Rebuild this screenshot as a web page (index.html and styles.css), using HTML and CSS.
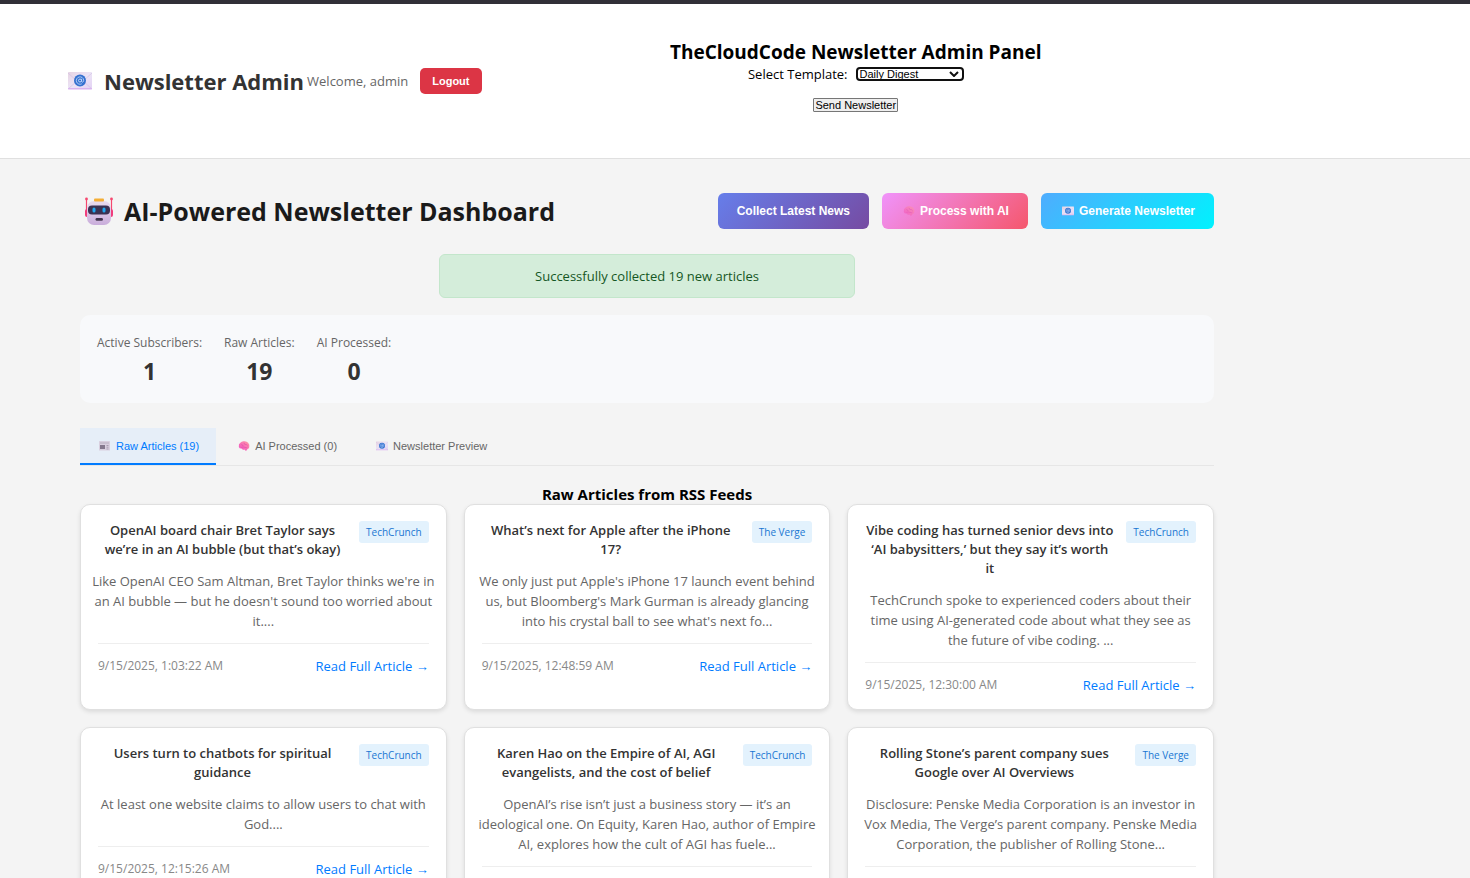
FILE: index.html
```html
<!DOCTYPE html>
<html lang="en">
<head>
<meta charset="utf-8">
<title>Newsletter Admin</title>
<link rel="stylesheet" href="styles.css">
</head>
<body>
<svg class="defs" aria-hidden="true">
  <defs>
    <linearGradient id="env" x1="0" y1="0" x2="1" y2="1"><stop offset="0" stop-color="#e6d3e2"/><stop offset=".5" stop-color="#ece4f6"/><stop offset="1" stop-color="#e3d2f4"/></linearGradient>
    <linearGradient id="face" x1="0" y1="0" x2="0" y2="1"><stop offset="0" stop-color="#e9dcef"/><stop offset="1" stop-color="#c9addb"/></linearGradient>
    <linearGradient id="brain" x1="1" y1="0" x2="0" y2="1"><stop offset="0" stop-color="#ff9aa5"/><stop offset="1" stop-color="#f04fc4"/></linearGradient>
    <symbol id="i-mail" viewBox="0 0 24 18">
      <rect x="0" y="0" width="24" height="17" rx="1" fill="url(#env)"/>
      <path d="M0 1l9 8-9 8M24 1l-9 8 9 8" fill="none" stroke="#d3c2e2" stroke-width=".7"/>
      <rect x="0" y="16" width="24" height="1.4" rx=".6" fill="#d9b4ef"/>
      <circle cx="12" cy="8.5" r="6" fill="#3572cf"/>
      <circle cx="12" cy="8.5" r="1.5" fill="none" stroke="#c6dcff" stroke-width=".9"/>
      <path d="M13.6 6.8v2.4q0 1 1 1 1.2-.3 1.1-2A3.7 3.7 0 1 0 13.8 11.8" fill="none" stroke="#c6dcff" stroke-width=".8"/>
    </symbol>
    <symbol id="i-robot" viewBox="0 0 28 28">
      <path d="M1.500 2v17M26.500 2v17" stroke="#f5476f" stroke-width="1.200"/>
      <circle cx="1.500" cy="2" r="1.400" fill="#f5476f"/><circle cx="26.500" cy="2" r="1.400" fill="#f5476f"/>
      <rect x="0" y="12" width="4" height="8" rx="2" fill="#f03d7c"/><rect x="24" y="12" width="4" height="8" rx="2" fill="#f03d7c"/>
      <rect x="2" y="4" width="24" height="24" rx="7" fill="url(#face)"/>
      <rect x="9" y="1.500" width="10" height="3" rx="1" fill="#f4ae35"/>
      <rect x="3" y="8.500" width="22" height="9" rx="4" fill="#3b3152"/>
      <rect x="7.500" y="10.500" width="3" height="5" rx="1.500" fill="#20a8f0"/><rect x="17.500" y="10.500" width="3" height="5" rx="1.500" fill="#20a8f0"/>
      <rect x="10.500" y="21" width="7.500" height="2.800" rx="1.400" fill="#44364f"/>
    </symbol>
    <symbol id="i-brain" viewBox="0 0 12 11">
      <path d="M.3 6.500Q-.2 3 2 2 3.500 0 6 .3q3-.3 4.500 1.700Q12.500 4 11.800 6.800q-.3 2-2 2Q9.500 11 7.700 10.800L6.500 9.300Q4 10 3.300 8.300 1 8.500 .3 6.500z" fill="url(#brain)"/>
      <path d="M3 4q2 0 2 1.500M6 2q0 2 2 2t2 1M3 7q2-1 4 0t3-.5" fill="none" stroke="#d63aa8" stroke-width=".5"/>
    </symbol>
    <symbol id="i-news" viewBox="0 0 12 10">
      <rect x="0" y="0" width="11" height="9.500" rx=".5" fill="#d9cfdf"/>
      <path d="M1 2h9" stroke="#b9aebf" stroke-width="1"/>
      <rect x="1" y="4" width="5" height="4" fill="#85788d"/>
      <path d="M7.500 4.500h2M7.500 6.200h2M7.500 8h2" stroke="#a598ad" stroke-width=".9"/>
    </symbol>
  </defs>
</svg>

<header class="topbar">
  <h1 class="brand"><svg class="brand-icon" aria-hidden="true"><use href="#i-mail"/></svg>Newsletter Admin</h1>
  <span class="welcome">Welcome, admin</span>
  <button class="logout" type="button">Logout</button>
  <div class="panel">
    <h2 class="panel-title">TheCloudCode Newsletter Admin Panel</h2>
    <div class="panel-row">
      <label for="template">Select Template:</label>
      <div class="select-box">
        <select id="template" class="template"><option>Daily Digest</option><option>Weekly Roundup</option></select>
        <svg class="chevron" viewBox="0 0 10 6" aria-hidden="true"><path d="M1 1l4 4 4-4" fill="none" stroke="#101010" stroke-width="2"/></svg>
      </div>
    </div>
    <button class="send" type="button">Send Newsletter</button>
  </div>
</header>

<main class="dashboard">
  <div class="dash-head">
    <h2 class="dash-title"><svg class="robot" aria-hidden="true"><use href="#i-robot"/></svg>AI-Powered Newsletter Dashboard</h2>
    <div class="actions">
      <button class="action collect" type="button">Collect Latest News</button>
      <button class="action process" type="button"><svg class="icon faded" aria-hidden="true"><use href="#i-brain"/></svg>Process with AI</button>
      <button class="action generate" type="button"><svg class="icon" aria-hidden="true"><use href="#i-mail"/></svg>Generate Newsletter</button>
    </div>
  </div>

  <p class="alert" role="status">Successfully collected 19 new articles</p>

  <section class="stats">
    <div class="stat"><span class="stat-label">Active Subscribers:</span><strong class="stat-value">1</strong></div>
    <div class="stat"><span class="stat-label">Raw Articles:</span><strong class="stat-value">19</strong></div>
    <div class="stat"><span class="stat-label">AI Processed:</span><strong class="stat-value">0</strong></div>
  </section>

  <nav class="tabs">
    <button class="tab active" type="button"><svg class="icon" aria-hidden="true"><use href="#i-news"/></svg>Raw Articles (19)</button>
    <button class="tab" type="button"><svg class="icon" aria-hidden="true"><use href="#i-brain"/></svg>AI Processed (0)</button>
    <button class="tab" type="button"><svg class="icon" aria-hidden="true"><use href="#i-mail"/></svg>Newsletter Preview</button>
  </nav>

  <h3 class="section-title">Raw Articles from RSS Feeds</h3>
  <div class="cards">
    <article class="card">
      <div class="card-head"><h4 class="card-title">OpenAI board chair Bret Taylor says we’re in an AI bubble (but that’s okay)</h4><span class="source">TechCrunch</span></div>
      <p class="summary">Like OpenAI CEO Sam Altman, Bret Taylor thinks we're in<br>an AI bubble — but he doesn't sound too worried about<br>it....</p>
      <div class="card-foot"><span class="date">9/15/2025, 1:03:22 AM</span><a class="read" href="#">Read Full Article →</a></div>
    </article>
    <article class="card">
      <div class="card-head"><h4 class="card-title">What’s next for Apple after the iPhone 17?</h4><span class="source">The Verge</span></div>
      <p class="summary">We only just put Apple's iPhone 17 launch event behind<br>us, but Bloomberg's Mark Gurman is already glancing<br>into his crystal ball to see what's next fo...</p>
      <div class="card-foot"><span class="date">9/15/2025, 12:48:59 AM</span><a class="read" href="#">Read Full Article →</a></div>
    </article>
    <article class="card">
      <div class="card-head"><h4 class="card-title">Vibe coding has turned senior devs into<br>‘AI babysitters,’ but they say it’s worth<br>it</h4><span class="source">TechCrunch</span></div>
      <p class="summary">TechCrunch spoke to experienced coders about their<br>time using AI-generated code about what they see as<br>the future of vibe coding. ...</p>
      <div class="card-foot"><span class="date">9/15/2025, 12:30:00 AM</span><a class="read" href="#">Read Full Article →</a></div>
    </article>
    <article class="card">
      <div class="card-head"><h4 class="card-title">Users turn to chatbots for spiritual<br>guidance</h4><span class="source">TechCrunch</span></div>
      <p class="summary">At least one website claims to allow users to chat with<br>God....</p>
      <div class="card-foot"><span class="date">9/15/2025, 12:15:26 AM</span><a class="read" href="#">Read Full Article →</a></div>
    </article>
    <article class="card">
      <div class="card-head"><h4 class="card-title">Karen Hao on the Empire of AI, AGI<br>evangelists, and the cost of belief</h4><span class="source">TechCrunch</span></div>
      <p class="summary">OpenAI’s rise isn’t just a business story — it’s an<br>ideological one. On Equity, Karen Hao, author of Empire<br>AI, explores how the cult of AGI has fuele...</p>
      <div class="card-foot"></div>
    </article>
    <article class="card">
      <div class="card-head"><h4 class="card-title">Rolling Stone’s parent company sues<br>Google over AI Overviews</h4><span class="source">The Verge</span></div>
      <p class="summary">Disclosure: Penske Media Corporation is an investor in<br>Vox Media, The Verge’s parent company. Penske Media<br>Corporation, the publisher of Rolling Stone...</p>
      <div class="card-foot"></div>
    </article>
  </div>
</main>
</body>
</html>
```
FILE: styles.css
```css
* { box-sizing: border-box; margin: 0; padding: 0; }

html { scrollbar-width: none; }

body {
  background: #f4f4f4;
  border-top: 4px solid #312f37;
  color: #000;
  font-family: "Segoe UI", "Open Sans", "Noto Sans", sans-serif;
  font-size: 13px;
}

button, select { font-family: Arial, "Liberation Sans", sans-serif; }

.defs { position: absolute; width: 0; height: 0; }

.topbar {
  display: flex;
  align-items: center;
  padding: 36px 240px 36px 68px;
  background: #fff;
  border-bottom: 1px solid #e0e0e0;
}

.brand {
  display: flex;
  align-items: center;
  gap: 12px;
  margin-right: 3px;
  color: #333;
  font-size: 22px;
  line-height: 32px;
  font-weight: 700;
  white-space: nowrap;
}
.brand-icon { width: 24px; height: 18px; }
.welcome { color: #666; font-weight: 500; white-space: nowrap; }
.logout {
  height: 26px;
  margin-left: 12px;
  padding: 0 12px;
  border: 0;
  border-radius: 5px;
  background: #dc3545;
  color: #fff;
  font-size: 11px;
  font-weight: 700;
}

.panel {
  flex: 1;
  display: flex;
  flex-direction: column;
  align-items: center;
  padding-bottom: 10px;
}
.panel-title { font-size: 19px; line-height: 24px; font-weight: 700; }
.panel-row {
  display: flex;
  align-items: center;
  gap: 8px;
  height: 20px;
  margin-bottom: 14px;
}
.select-box { position: relative; display: flex; }
.template {
  appearance: none;
  width: 108px;
  height: 14px;
  padding: 0 14px 0 2px;
  border: 2px solid #101010;
  border-radius: 4px;
  background: #fff;
  color: #000;
  font-size: 11px;
  line-height: 10px;
}
.chevron {
  position: absolute;
  right: 5px;
  top: 4px;
  width: 10px;
  height: 6px;
  pointer-events: none;
}
.send {
  height: 14px;
  padding: 0 1px;
  border: 1px solid #767676;
  border-radius: 1px;
  background: #efefef;
  color: #000;
  font-size: 11px;
  line-height: 12px;
}

.dashboard { padding: 34px 256px 0 80px; }

.dash-head { display: flex; justify-content: space-between; align-items: center; }
.dash-title {
  display: flex;
  align-items: center;
  gap: 11px;
  padding-left: 5px;
  color: #1a1a1a;
  font-size: 25px;
  line-height: 36px;
  font-weight: 700;
  white-space: nowrap;
}
.robot { width: 28px; height: 28px; }
.actions { display: flex; gap: 13px; }
.action {
  display: flex;
  align-items: center;
  height: 36px;
  padding: 0 19px;
  border: 0;
  border-radius: 6px;
  color: #fff;
  font-size: 12px;
  font-weight: 700;
  white-space: nowrap;
}
.collect { background: linear-gradient(135deg, #667eea 0%, #764ba2 100%); }
.process { background: linear-gradient(135deg, #f093fb 0%, #f5576c 100%); }
.generate { background: linear-gradient(135deg, #4facfe 0%, #00f2fe 100%); }
.icon { width: 12px; height: 10px; margin: 0 5px 0 2px; }
.faded { opacity: .7; }

.alert {
  width: 416px;
  margin: 25px auto 17px;
  padding: 12px;
  border: 1px solid #c3e6cb;
  border-radius: 6px;
  background: #d4edda;
  color: #155724;
  font-weight: 500;
  line-height: 18px;
  text-align: center;
}

.stats {
  display: flex;
  gap: 22px;
  padding: 17px 17px 15px;
  border-radius: 10px;
  background: #f8f9fb;
  text-align: center;
}
.stat { display: flex; flex-direction: column; }
.stat-label { color: #666; font-size: 12px; line-height: 22px; font-weight: 500; }
.stat-value { color: #333; font-size: 23px; line-height: 34px; }

.tabs { display: flex; gap: 3px; margin-top: 25px; border-bottom: 1px solid #e6e6e6; }
.tab {
  display: flex;
  align-items: center;
  height: 37px;
  padding: 0 17px;
  border: 0;
  border-bottom: 2px solid transparent;
  background: transparent;
  color: #666;
  font-size: 11px;
  white-space: nowrap;
}
.tab.active { border-bottom-color: #007bff; background: #e6eef8; color: #007bff; }

.section-title {
  margin-top: 18px;
  font-size: 15px;
  line-height: 20px;
  font-weight: 700;
  text-align: center;
}

.cards { display: grid; grid-template-columns: repeat(3, 1fr); gap: 17px; }
.card {
  padding: 16px 17px 14px;
  border: 1px solid #e0e0e0;
  border-radius: 10px;
  background: #fff;
  box-shadow: 0 2px 4px rgba(0, 0, 0, .1);
  text-align: center;
}
.card-head { display: flex; align-items: flex-start; justify-content: space-between; gap: 12px; margin-bottom: 12px; }
.card-title { flex: 1; color: #333; font-size: 13px; line-height: 19px; font-weight: 600; white-space: nowrap; white-space: normal; }
.source {
  padding: 1px 7px;
  border-radius: 3px;
  background: #e3f2fd;
  color: #1976d2;
  font-size: 10px;
  line-height: 20px;
  white-space: nowrap;
}
.summary { margin: 0 -12px; color: #666; line-height: 20px; }
.card-foot {
  display: flex;
  justify-content: space-between;
  align-items: center;
  min-height: 33px;
  margin-top: 12px;
  padding-top: 12px;
  border-top: 1px solid #eee;
  line-height: 20px;
}
.date { color: #888; font-size: 12px; }
.read { color: #007bff; font-weight: 500; text-decoration: none; }
```
